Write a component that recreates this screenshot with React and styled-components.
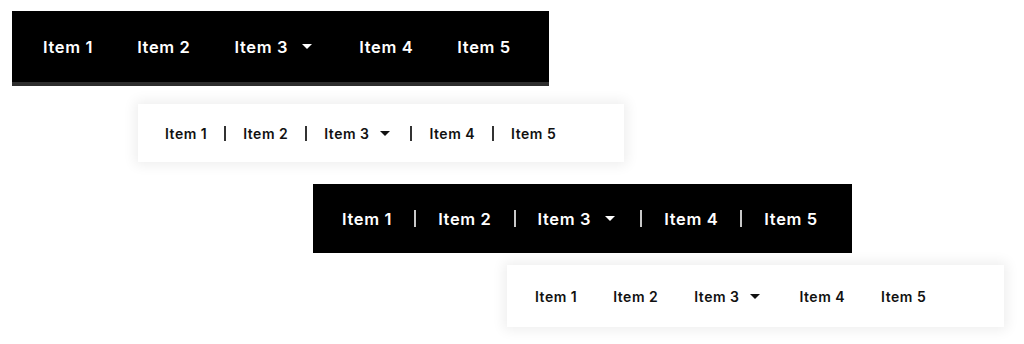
import React from "react";
import styled, { createGlobalStyle } from "styled-components";

const items = ["Item 1", "Item 2", "Item 3", "Item 4", "Item 5"];

const GlobalStyle = createGlobalStyle`
  body {
    margin: 0;
    background: #fff;
    font-family: "Inter", "Noto Sans", sans-serif;
  }
`;

function NavBar({ dark, divided, size, offset, top, width, height, pad, gap, border }) {
  return (
    <Bar
      $dark={dark}
      $offset={offset}
      $top={top}
      $width={width}
      $height={height}
      $pad={pad}
      $border={border}
    >
      {items.map((label, i) => (
        <React.Fragment key={label}>
          {divided && i > 0 && <Divider $dark={dark} $gap={gap} />}
          <Link $size={size} $gap={divided ? 0 : gap} $first={i === 0}>
            {label}
            {i === 2 && <Caret $dark={dark} $big={size > 15} />}
          </Link>
        </React.Fragment>
      ))}
    </Bar>
  );
}

export default function App() {
  return (
    <>
      <GlobalStyle />
      <Page>
        <NavBar dark size={16.5} offset={12} top={11} width={537} height={75} pad={31} gap={44} border />
        <NavBar divided size={14} offset={138} top={18} width={486} height={58} pad={27} gap={17} />
        <NavBar dark divided size={16.5} offset={313} top={22} width={539} height={69} pad={29} gap={22} />
        <NavBar size={14} offset={507} top={12} width={497} height={62} pad={28} gap={36} />
      </Page>
    </>
  );
}

const Page = styled.div`
  display: flex;
  flex-direction: column;
  align-items: flex-start;
  padding-bottom: 20px;
`;

const Bar = styled.nav`
  box-sizing: border-box;
  display: flex;
  align-items: center;
  margin-left: ${(p) => p.$offset}px;
  margin-top: ${(p) => p.$top}px;
  width: ${(p) => p.$width}px;
  height: ${(p) => p.$height}px;
  padding-left: ${(p) => p.$pad}px;
  background: ${(p) => (p.$dark ? "#000" : "#fff")};
  color: ${(p) => (p.$dark ? "#fff" : "#111")};
  border-bottom: ${(p) => (p.$border ? "4px solid #2e2e2e" : "none")};
  box-shadow: ${(p) => (p.$dark ? "none" : "0 0 12px 3px rgba(0, 0, 0, 0.07)")};
`;

const Link = styled.a`
  display: flex;
  align-items: center;
  font-size: ${(p) => p.$size}px;
  font-weight: 600;
  letter-spacing: ${(p) => (p.$size > 15 ? 0.65 : 0.5)}px;
  white-space: nowrap;
  margin-left: ${(p) => (p.$first ? 0 : p.$gap)}px;
  cursor: pointer;
`;

const Caret = styled.span`
  width: 0;
  height: 0;
  margin-left: ${(p) => (p.$big ? 14 : 11)}px;
  margin-right: 3px;
  border-left: 5px solid transparent;
  border-right: 5px solid transparent;
  border-top: 5px solid ${(p) => (p.$dark ? "#fff" : "#111")};
`;

const Divider = styled.span`
  width: 2px;
  height: ${(p) => (p.$dark ? 17 : 15)}px;
  margin: 0 ${(p) => p.$gap}px;
  background: ${(p) => (p.$dark ? "#c8c8c8" : "#333")};
`;
